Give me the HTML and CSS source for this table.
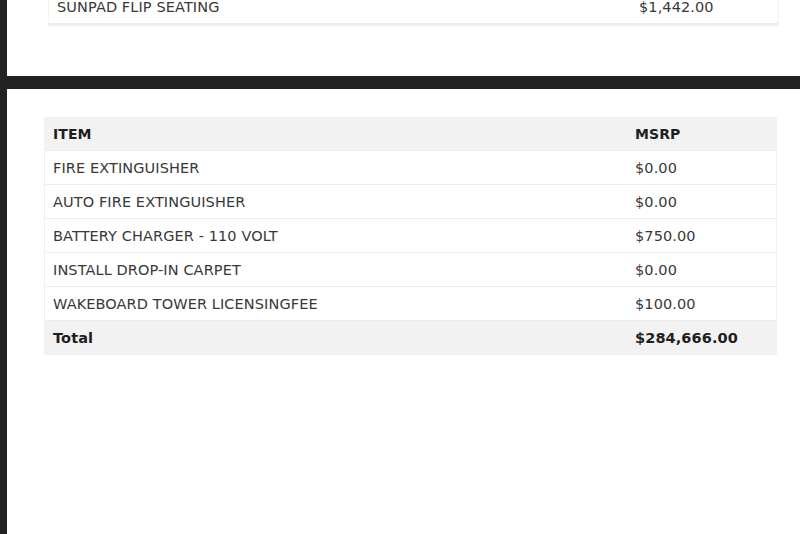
FILE: index.html
```html
<!DOCTYPE html>
<html>
<head>
<meta charset="utf-8">
<link rel="stylesheet" href="styles.css">
</head>
<body>
<div class="screen">
  <section class="panel panel-top">
    <div class="prev-table">
      <div class="row">
        <span class="cell item">SUNPAD FLIP SEATING</span>
        <span class="cell price">$1,442.00</span>
      </div>
    </div>
  </section>
  <section class="panel panel-main">
    <div class="table">
      <div class="row head">
        <span class="cell item">ITEM</span>
        <span class="cell price">MSRP</span>
      </div>
      <div class="row">
        <span class="cell item">FIRE EXTINGUISHER</span>
        <span class="cell price">$0.00</span>
      </div>
      <div class="row">
        <span class="cell item">AUTO FIRE EXTINGUISHER</span>
        <span class="cell price">$0.00</span>
      </div>
      <div class="row">
        <span class="cell item">BATTERY CHARGER - 110 VOLT</span>
        <span class="cell price">$750.00</span>
      </div>
      <div class="row">
        <span class="cell item">INSTALL DROP-IN CARPET</span>
        <span class="cell price">$0.00</span>
      </div>
      <div class="row">
        <span class="cell item">WAKEBOARD TOWER LICENSINGFEE</span>
        <span class="cell price">$100.00</span>
      </div>
      <div class="row total">
        <span class="cell item">Total</span>
        <span class="cell price">$284,666.00</span>
      </div>
    </div>
  </section>
</div>
</body>
</html>
```
FILE: styles.css
```css
html, body {
  margin: 0;
  padding: 0;
  background: #222222;
  height: 100%;
  overflow: hidden;
}
.screen {
  display: flex;
  flex-direction: column;
  gap: 13px;
  height: 534px;
  padding-left: 7px;
  box-sizing: border-box;
  font-family: "DejaVu Sans", "Liberation Sans", sans-serif;
  color: #383838;
}
.panel {
  background: #ffffff;
  overflow: hidden;
}
.panel-top {
  height: 76px;
  flex: none;
  padding-left: 41px;
  padding-right: 21px;
}
.prev-table {
  margin-top: -10px;
  border-left: 1px solid #f3f3f3;
  border-right: 1px solid #f3f3f3;
  border-bottom: 2px solid #efefef;
}
.panel-main {
  flex: 1;
  padding: 28px 23px 0 37px;
}
.table {
  border-left: 1px solid #f0f0f0;
  border-right: 1px solid #f3f3f3;
}
.row {
  display: flex;
  align-items: center;
  height: 34px;
  box-sizing: border-box;
  border-bottom: 1px solid #ececec;
  font-size: 14.5px;
  letter-spacing: 0.1px;
}
.cell.item {
  width: 582px;
  padding-left: 8px;
}
.prev-table .cell.item {
  width: 582px;
  padding-left: 8px;
}
.cell.price {
  flex: 1;
}
.head, .total {
  background: #f2f2f2;
  font-weight: bold;
  color: #1e1e1e;
}
.head {
  font-size: 14px;
}
.total {
  border-bottom: none;
  font-size: 14.5px;
}
```
